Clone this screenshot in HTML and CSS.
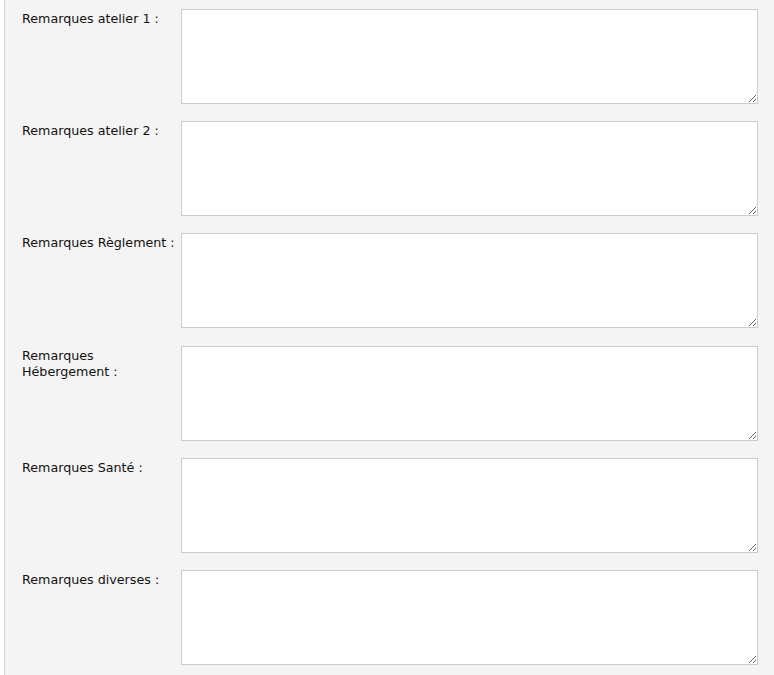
FILE: index.html
```html
<!DOCTYPE html>
<html lang="fr">
<head>
<meta charset="utf-8">
<title>Remarques</title>
<link rel="stylesheet" href="styles.css">
</head>
<body>
<div class="panel">
  <div class="row"><label class="label" for="r1">Remarques atelier 1&nbsp;:</label><textarea class="field" id="r1"></textarea></div>
  <div class="row"><label class="label" for="r2">Remarques atelier 2&nbsp;:</label><textarea class="field" id="r2"></textarea></div>
  <div class="row"><label class="label" for="r3">Remarques Règlement&nbsp;:</label><textarea class="field" id="r3"></textarea></div>
  <div class="row"><label class="label" for="r4">Remarques Hébergement&nbsp;:</label><textarea class="field" id="r4"></textarea></div>
  <div class="row"><label class="label" for="r5">Remarques Santé&nbsp;:</label><textarea class="field" id="r5"></textarea></div>
  <div class="row"><label class="label" for="r6">Remarques diverses&nbsp;:</label><textarea class="field" id="r6"></textarea></div>
</div>
</body>
</html>
```
FILE: styles.css
```css
html, body {
  margin: 0;
  padding: 0;
  background: #ffffff;
}
.panel {
  margin-left: 4px;
  border-left: 1px solid #d4d4d4;
  background: #f4f4f4;
  padding: 9px 16px 0 17px;
  min-height: 675px;
  box-sizing: border-box;
  display: flex;
  flex-direction: column;
  gap: 17.2px;
  font-family: "DejaVu Sans", Verdana, sans-serif;
  font-size: 12.7px;
  color: #111111;
}
.row {
  display: flex;
  align-items: flex-start;
  gap: 4px;
}
.label {
  width: 155px;
  flex: none;
  line-height: 16px;
  padding-top: 2px;
}
.field {
  width: 577px;
  height: 95px;
  box-sizing: border-box;
  margin: 0;
  border: 1px solid #cccccc;
  background: #ffffff;
  padding: 2px;
  font-family: inherit;
  font-size: 12px;
}
```
